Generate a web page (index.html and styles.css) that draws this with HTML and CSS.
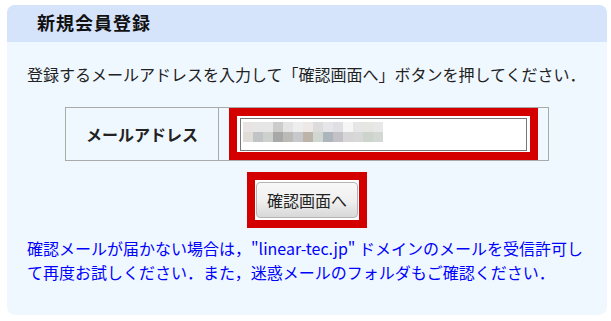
FILE: index.html
```html
<!DOCTYPE html>
<html lang="ja">
<head>
    <meta charset="UTF-8">
    <meta name="viewport" content="width=device-width, initial-scale=1.0">
    <title>新規会員登録</title>
    <link rel="stylesheet" href="styles.css">
</head>
<body>
    <div class="register-box">
        <h2 class="register-title">新規会員登録</h2>

        <div class="register-body">
            <p class="lead">登録するメールアドレスを入力して「確認画面へ」ボタンを押してください．</p>

            <form id="registerForm">
                <table class="form-table">
                    <tr>
                        <th>メールアドレス</th>
                        <td>
                            <div class="highlight">
                                <input type="text" name="email" class="email-input">
                            </div>
                        </td>
                    </tr>
                </table>

                <div class="submit-row">
                    <div class="highlight">
                        <button type="submit" class="submit-btn">確認画面へ</button>
                    </div>
                </div>
            </form>

            <p class="notice">確認メールが届かない場合は，"linear-tec.jp" ドメインのメールを受信許可し<br>て再度お試しください．また，迷惑メールのフォルダもご確認ください．</p>
        </div>
    </div>
</body>
</html>
```

FILE: styles.css
```css
body {
    margin: 0;
    padding: 5px 4px 7px 7px;
    background: #ffffff;
    font-family: "Noto Sans CJK JP", "Noto Sans", sans-serif;
    color: #222;
}

.register-box {
    width: 600px;
    background: #f0f8ff;
    border-radius: 8px;
    overflow: hidden;
}

.register-title {
    margin: 0;
    height: 37px;
    line-height: 35px;
    padding-left: 30px;
    background: #d5e3fb;
    font-size: 18px;
    font-weight: bold;
    letter-spacing: 1px;
    color: #111;
}

.register-body {
    padding: 20px 20px 31px 20px;
}

.lead {
    margin: 0 0 21px 0;
    font-size: 16px;
    line-height: 24px;
    white-space: nowrap;
    color: #222;
}

.form-table {
    margin: 0 auto;
    width: 484px;
    border-collapse: collapse;
}

.form-table th,
.form-table td {
    border: 1px solid #aaa;
    height: 52px;
}

.form-table th {
    width: 152px;
    font-size: 16px;
    font-weight: bold;
    text-align: center;
    padding: 0;
}

.form-table td {
    padding: 0 10px;
}

.highlight {
    border: 8px solid #d40000;
    background: white;
    padding: 2px 3px 1px 3px;
}

.email-input {
    display: block;
    width: 100%;
    height: 33px;
    box-sizing: border-box;
    border: 1px solid #777;
    background-color: white;
    background-image:
        linear-gradient(to right,
            #e8e4e4 0 10px, #e6e6e6 10px 30px, #cccccc 30px 40px, #e4e4e4 40px 50px,
            #eeeeee 50px 60px, #eee8e6 60px 70px, #dcdcdc 70px 80px, #e6e6ea 80px 90px,
            #e0e0e4 90px 100px, #f6f6f6 100px 110px, #e6e6e6 110px 120px,
            #e6e6e2 120px 130px, #e8e8e8 130px 140px),
        linear-gradient(to right,
            #e0dcd8 0 10px, #c0c4c6 10px 20px, #cdd0cc 20px 30px, #a8a8a8 30px 40px,
            #bcbab6 40px 50px, #c6c8cc 50px 60px, #bcb4a8 60px 70px, #d0d6d0 70px 80px,
            #acb4bc 80px 90px, #c4c0c8 90px 100px, #d6d6d6 100px 110px,
            #d8d8d8 110px 120px, #ccd4cc 120px 130px, #d4d8d4 130px 140px);
    background-size: 140px 10px, 140px 10px;
    background-position: 2px 3px, 2px 13px;
    background-repeat: no-repeat;
}

.email-input:focus {
    outline: none;
}

.submit-row {
    display: flex;
    justify-content: center;
    margin-top: 11px;
}

.submit-row .highlight {
    padding: 2px 1px;
}

.submit-btn {
    display: block;
    width: 102px;
    height: 36px;
    padding: 0;
    border: 1px solid #b4b4b4;
    border-radius: 4px;
    background: linear-gradient(#f8f8f8, #efefef 55%, #d8d8d8);
    font-family: "Noto Sans CJK JP", sans-serif;
    font-size: 16px;
    color: #222;
    cursor: pointer;
}

.notice {
    margin: 8px 0 0 0;
    font-size: 16px;
    line-height: 24px;
    color: #0000ff;
}
```
